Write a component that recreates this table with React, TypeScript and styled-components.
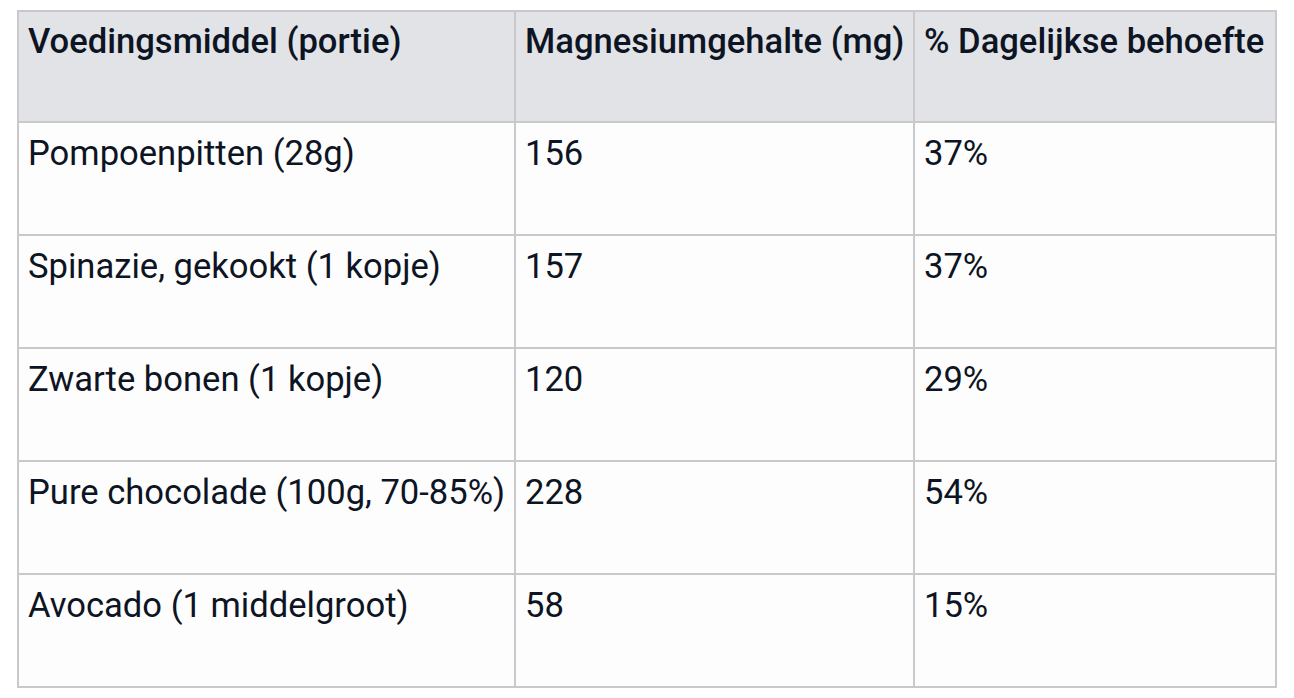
import React from "react";
import styled, { createGlobalStyle } from "styled-components";

const Global = createGlobalStyle`
  html, body { margin: 0; padding: 0; background: #ffffff; }
  body { font-family: Roboto, "Noto Sans", sans-serif; color: #0d1423; }
`;

const Page = styled.div`
  padding: 10px 18px 10px 17px;
`;

const Table = styled.table`
  border-collapse: collapse;
  width: 1258px;
  table-layout: fixed;
  font-size: 34.6px;
  background: #fdfdfd;
`;

const Th = styled.th<{ $w: number }>`
  width: ${(p) => p.$w}px;
  background: #e2e3e6;
  border: 2px solid #c9c9cb;
  font-weight: 500;
  text-align: left;
  vertical-align: top;
  padding: 9px 4px 0 9px;
  height: 111px;
  box-sizing: border-box;
  line-height: normal;
  white-space: nowrap;
`;

const Td = styled.td`
  border: 2px solid #c9c9cb;
  font-weight: 400;
  vertical-align: top;
  padding: 10px 4px 0 9px;
  height: 113px;
  box-sizing: border-box;
  line-height: normal;
  white-space: nowrap;
`;

const rows = [
  ["Pompoenpitten (28g)", "156", "37%"],
  ["Spinazie, gekookt (1 kopje)", "157", "37%"],
  ["Zwarte bonen (1 kopje)", "120", "29%"],
  ["Pure chocolade (100g, 70-85%)", "228", "54%"],
  ["Avocado (1 middelgroot)", "58", "15%"],
];

export default function App() {
  return (
    <>
      <Global />
      <Page>
        <Table>
          <thead>
            <tr>
              <Th $w={497}>Voedingsmiddel (portie)</Th>
              <Th $w={399}>Magnesiumgehalte (mg)</Th>
              <Th $w={362}>% Dagelijkse behoefte</Th>
            </tr>
          </thead>
          <tbody>
            {rows.map((r) => (
              <tr key={r[0]}>
                {r.map((c, i) => (
                  <Td key={i}>{c}</Td>
                ))}
              </tr>
            ))}
          </tbody>
        </Table>
      </Page>
    </>
  );
}
